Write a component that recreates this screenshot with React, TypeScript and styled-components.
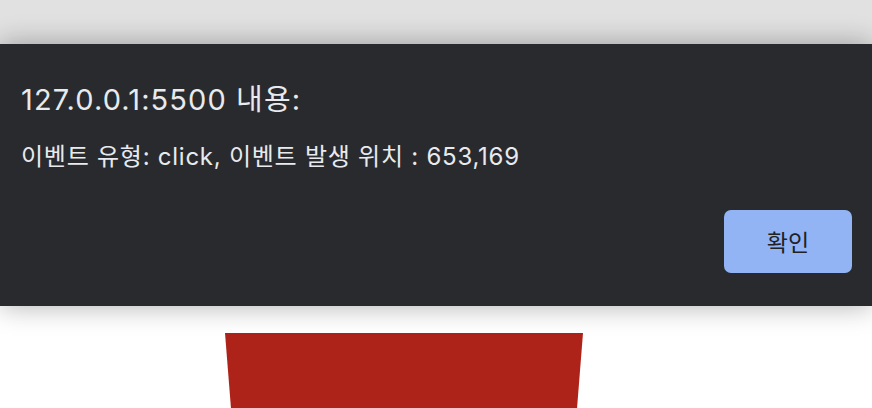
import React from 'react'
import styled, { createGlobalStyle } from 'styled-components'

const GlobalStyle = createGlobalStyle`
  html, body {
    margin: 0;
    padding: 0;
    background: #ffffff;
    overflow: hidden;
  }
  body {
    font-family: Inter, "Noto Sans CJK KR", sans-serif;
  }
`

const Page = styled.div`
  width: 872px;
  height: 408px;
  display: flex;
  flex-direction: column;
  overflow: hidden;
`

const TopStrip = styled.div`
  height: 44px;
  flex-shrink: 0;
  background: #e1e1e1;
`

const Dialog = styled.div`
  position: relative;
  z-index: 1;
  height: 262px;
  flex-shrink: 0;
  box-sizing: border-box;
  padding: 38px 20px 33px 21px;
  background: #292a2d;
  color: #e8eaed;
  display: flex;
  flex-direction: column;
  box-shadow: 0 0 26px rgba(0, 0, 0, 0.32);
`

const Title = styled.div`
  font-size: 29px;
  line-height: 36px;
  letter-spacing: 1.1px;
  white-space: nowrap;
`

const Message = styled.div`
  margin-top: 24px;
  font-size: 24px;
  line-height: 30px;
  letter-spacing: 0.75px;
  white-space: nowrap;
`

const Actions = styled.div`
  margin-top: auto;
  display: flex;
  justify-content: flex-end;
`

const ConfirmButton = styled.button`
  width: 128px;
  height: 63px;
  border: none;
  border-radius: 7px;
  background: #92b4f4;
  color: #202124;
  font-family: Inter, "Noto Sans CJK KR", sans-serif;
  font-size: 23px;
  font-weight: 400;
  display: flex;
  align-items: center;
  justify-content: center;
  padding: 0 0 2px;
  cursor: pointer;
`

const Stage = styled.div`
  flex: 1;
  background: #ffffff;
  padding: 27px 0 0 225px;
`

const RedCup = styled.div`
  width: 358px;
  height: 90px;
  background: #ad2319;
  clip-path: polygon(0 0, 100% 0, 98% 100%, 2% 100%);
  filter: blur(0.5px);
`

export default function App() {
  return (
    <Page>
      <GlobalStyle />
      <TopStrip />
      <Dialog>
        <Title>127.0.0.1:5500 내용:</Title>
        <Message>이벤트 유형: click, 이벤트 발생 위치 : 653,169</Message>
        <Actions>
          <ConfirmButton>확인</ConfirmButton>
        </Actions>
      </Dialog>
      <Stage>
        <RedCup />
      </Stage>
    </Page>
  )
}
